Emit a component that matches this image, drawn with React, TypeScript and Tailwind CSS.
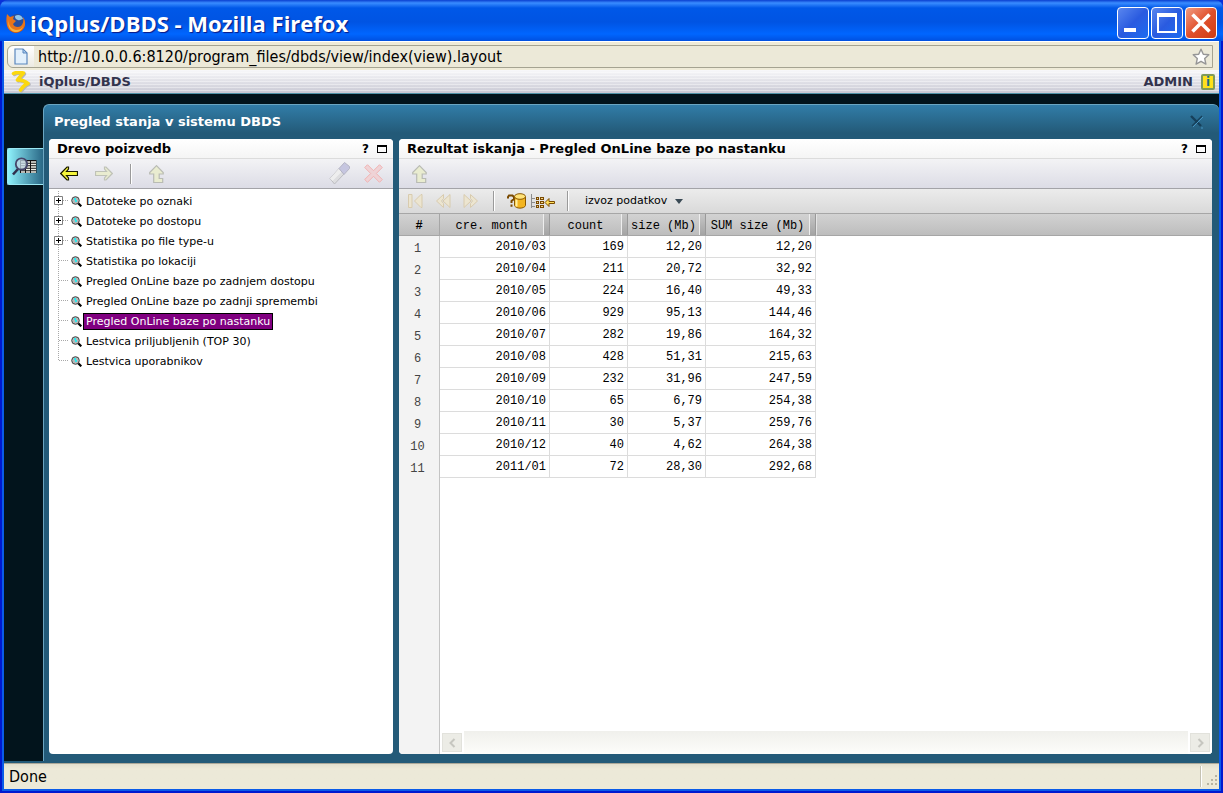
import { ReactNode } from "react";
import { clsx } from "clsx";

type TreeItem = {
    label: string;
    expandable?: boolean;
    selected?: boolean;
};

const treeItems: TreeItem[] = [
    { label: "Datoteke po oznaki", expandable: true },
    { label: "Datoteke po dostopu", expandable: true },
    { label: "Statistika po file type-u", expandable: true },
    { label: "Statistika po lokaciji" },
    { label: "Pregled OnLine baze po zadnjem dostopu" },
    { label: "Pregled OnLine baze po zadnji spremembi" },
    { label: "Pregled OnLine baze po nastanku", selected: true },
    { label: "Lestvica priljubljenih (TOP 30)" },
    { label: "Lestvica uporabnikov" },
];

const columns = ["cre. month", "count", "size (Mb)", "SUM size (Mb)"];

const rows = [
    ["2010/03", "169", "12,20", "12,20"],
    ["2010/04", "211", "20,72", "32,92"],
    ["2010/05", "224", "16,40", "49,33"],
    ["2010/06", "929", "95,13", "144,46"],
    ["2010/07", "282", "19,86", "164,32"],
    ["2010/08", "428", "51,31", "215,63"],
    ["2010/09", "232", "31,96", "247,59"],
    ["2010/10", "65", "6,79", "254,38"],
    ["2010/11", "30", "5,37", "259,76"],
    ["2010/12", "40", "4,62", "264,38"],
    ["2011/01", "72", "28,30", "292,68"],
];

function FirefoxIcon() {
    return (
        <svg width="20" height="22" viewBox="0 0 20 22" aria-hidden="true">
            <circle cx="10" cy="12" r="9" fill="#c4480c" />
            <circle cx="11" cy="9" r="7" fill="#2b4f9c" />
            <path d="M9 4c3-2 7-1 8 3-2 0-3 2-5 1s-3-1-3-4z" fill="#8fc6ee" />
            <path d="M1 2l3 3 4-1-1 3 3 2-3 3c1 3 5 4 8 2 2-2 3-5 2-9 3 4 3 10-1 13-4 4-11 3-14-2-2-4-2-9-1-14z" fill="#e8741a" />
            <path d="M3 8c-1 5 2 9 7 10 3 0 6-1 7-4-1 6-8 8-12 4-3-3-3-7-2-10z" fill="#f7b03c" />
        </svg>
    );
}

function PageIcon() {
    return (
        <svg width="14" height="17" viewBox="0 0 14 17" aria-hidden="true">
            <path d="M1 1h8l4 4v11H1z" fill="#e3f0fc" stroke="#5b87bd" strokeWidth="1.2" />
            <path d="M9 1v4h4z" fill="#a9cbee" stroke="#5b87bd" />
        </svg>
    );
}

function StarIcon() {
    return (
        <svg width="18" height="18" viewBox="0 0 18 18" aria-hidden="true">
            <path d="M9 1.2l2.3 5 5.5.6-4.1 3.7 1.2 5.6L9 13.3l-4.9 2.8 1.2-5.6L1.2 6.8l5.5-.6z" fill="#fff" stroke="#969696" strokeWidth="1.4" strokeLinejoin="round" />
        </svg>
    );
}

function LogoIcon() {
    return (
        <svg width="20" height="22" viewBox="0 0 20 22" fill="none" strokeLinecap="round" strokeLinejoin="round" aria-hidden="true">
            <path d="M3.5 3.5c4-2 7-1 10-.5-2 2-4 4-6 7 4-.5 7 1 10.500 3.500-3 1-5 3-7.500 6.500" stroke="#b4b4bc" strokeWidth="3.4" />
            <path d="M2.5 2.500c4-2 7-1 10-.5-2 2-4 4-6 7 4-.5 7 1 10.500 3.500-3 1-5 3-7.500 6.500" stroke="#fbd80f" strokeWidth="3.6" />
        </svg>
    );
}

function SideArrow({ disabled, flip }: { disabled?: boolean; flip?: boolean }) {
    return (
        <svg width="18" height="15" viewBox="0 0 18 15" className={clsx("block", flip && "-scale-x-100")} aria-hidden="true">
            <path
                d="M.7 7.5L7 1h1.5v2L6.5 5.5h11v4h-11l2 2.5v2H7z"
                fill={disabled ? "#e9ecd0" : "#f6f63c"}
                stroke={disabled ? "#bfc2b8" : "#1a1a00"}
                strokeWidth="1.2"
            />
        </svg>
    );
}

function UpArrow() {
    return (
        <svg width="15" height="18" viewBox="0 0 15 18" className="block" aria-hidden="true">
            <path d="M7.5.7L.7 7.5V9h4v8.500h9v-4h-3.500V9h4V7.500z" fill="#e9ecd0" stroke="#b9bbb4" strokeWidth="1.2" />
        </svg>
    );
}

function EraserIcon() {
    return (
        <svg width="21" height="23" viewBox="0 0 21 23" className="block" aria-hidden="true">
            <path d="M1 16.500L10 6.500l5 5.500-9.500 10z" fill="#dedee0" stroke="#bcbcc0" />
            <path d="M1 16.500L10 6.500l3 3-9.500 9.500z" fill="#eeeeee" />
            <path d="M15.500.5l5 4v2L15 12.500l-5-6z" fill="#c6c6e0" stroke="#b4b4c4" />
        </svg>
    );
}

function DeleteIcon() {
    return (
        <svg width="19" height="19" viewBox="0 0 19 19" className="block" aria-hidden="true">
            <path d="M3.5.7l6 6 6-6 2.800 2.800-6 6 6 6-2.800 2.800-6-6-6 6L.7 15.500l6-6-6-6z" fill="#efd3d6" stroke="#f0b3b3" />
        </svg>
    );
}

function PagerIcon({ kind }: { kind: "first" | "prev" | "next" }) {
    return (
        <svg width="16" height="14" viewBox="0 0 16 14" className={clsx("block", kind === "next" && "-scale-x-100")} fill="#ece5d0" stroke="#d8cbae" aria-hidden="true">
            {kind === "first" ? (
                <>
                    <path d="M1.500.5H5v13H1.500z" />
                    <path d="M15 .5v13h-1L7.500 7 14 .5z" />
                </>
            ) : (
                <>
                    <path d="M8.500.5v4L6.500 7l2 2.500v4L1.500 7z" />
                    <path d="M15 .5v13L8 7z" />
                </>
            )}
        </svg>
    );
}

function QueryDbIcon() {
    return (
        <svg width="19" height="16" viewBox="0 0 19 16" className="block" aria-hidden="true">
            <path d="M1 5.5V4l1-1.500h3.500L7 4v2L4.500 8v2M4.500 11.500v2.300" fill="none" stroke="#7a4a00" strokeWidth="2" />
            <path d="M7.500 4v8.500c1 3.500 10 3.500 11 0V4z" fill="#f3b521" stroke="#8a5800" />
            <path d="M9.500 6.500v7" stroke="#fff0a0" strokeWidth="2" />
            <ellipse cx="13" cy="3.500" rx="5.500" ry="2.800" fill="#ffe278" stroke="#8a5800" />
        </svg>
    );
}

function GroupIcon() {
    return (
        <svg width="25" height="15" viewBox="0 0 25 15" className="block" fill="none" aria-hidden="true">
            <path d="M1.500 0v14M1.500 4.500H5M1.500 8.500H5M1.500 12.500H5" stroke="#8c8c8c" />
            <path d="M6 4.500h3M10 4.500h4M6 8.500h3M10 8.500h4M6 12.500h3M10 12.500h4" stroke="#7a4a00" strokeWidth="3" />
            <path d="M7 4.500h1M11 4.500h2M7 8.500h1M11 8.500h2M7 12.500h1M11 12.500h2" stroke="#f3d38a" />
            <path d="M15 8.500l4-4v3h5.500v2H19v3z" fill="#ffdf5a" stroke="#7a4a00" />
        </svg>
    );
}

function Magnifier() {
    return (
        <svg width="11" height="11" viewBox="0 0 11 11" className="shrink-0" aria-hidden="true">
            <path d="M6.500 6.500l3.800 3.800" stroke="#000" strokeWidth="2.200" />
            <circle cx="4.500" cy="4.500" r="3.800" fill="#b4b8b8" stroke="#444" />
            <path d="M3 2h2v2h1v2H4V4H3z" fill="#2fe6ea" />
        </svg>
    );
}

function SearchTableIcon() {
    return (
        <svg width="25" height="19" viewBox="0 0 25 19" className="block" aria-hidden="true">
            <path d="M8 3h16.500v13H8z" fill="#111" />
            <path d="M9 5h15M9 7.500h15M9 10h15M9 12.500h15M9 15h15" stroke="#f2f2ea" strokeWidth="1.500" />
            <path d="M13.500 3v13M18.500 3v13" stroke="#111" />
            <path d="M6 12l-5 5.500" stroke="#2f2f4d" strokeWidth="2.600" />
            <circle cx="9.500" cy="7" r="5.700" fill="#c5dbe8" fillOpacity=".75" stroke="#45456a" strokeWidth="1.800" />
        </svg>
    );
}

function TreeLines({ expandable, last }: { expandable?: boolean; last: boolean }) {
    return (
        <svg width="22" height="20" viewBox="0 0 22 20" className="shrink-0" aria-hidden="true">
            <path d={last ? "M9.500 0v10" : "M9.500 0v20"} stroke="#a8a8a8" strokeDasharray="1 1" />
            <path d="M10 9.500h10" stroke="#a8a8a8" strokeDasharray="1 1" />
            {expandable && (
                <>
                    <path d="M5.500 5.500h8v8h-8z" fill="#fff" stroke="#808080" />
                    <path d="M7 9.500h5M9.500 7v5" stroke="#000" />
                </>
            )}
        </svg>
    );
}

function Separator() {
    return <div className="h-5 w-0.5 border-l border-[#9a9a9a] bg-white" />;
}

function IconButton({ label, disabled, children }: { label: string; disabled?: boolean; children: ReactNode }) {
    return (
        <button type="button" aria-label={label} disabled={disabled} className="block shrink-0">
            {children}
        </button>
    );
}

function Panel({ title, className, children }: { title: string; className?: string; children: ReactNode }) {
    return (
        <section className={clsx("flex min-h-0 flex-col overflow-hidden rounded bg-white", className)}>
            <header className="flex h-5 shrink-0 items-center justify-between border-b border-[#dcdcdc] bg-linear-to-b from-white to-[#f5f5f5] pr-1.5 pl-2">
                <h2 className="text-[13px] font-bold">{title}</h2>
                <div className="flex items-center gap-2">
                    <button type="button" className="text-[12px] leading-4 font-bold">?</button>
                    <button type="button" aria-label="Maximize panel" className="h-2 w-2.5 border border-t-2 border-black" />
                </div>
            </header>
            {children}
        </section>
    );
}

function TitleBar() {
    return (
        <div className="flex h-[41px] shrink-0 items-center justify-between rounded-t-lg bg-[linear-gradient(to_bottom,#0a3fd0,#3a8cff_3px,#0058e8_8px,#0054e3_22px,#0066ff_34px,#0050e0)] px-1.5">
            <div className="flex items-center gap-1 pt-1">
                <FirefoxIcon />
                <h1 className="font-['Open_Sans',sans-serif] text-[22px] leading-8 font-bold text-white [text-shadow:1px_1px_1px_#0a1883]">
                    iQplus/DBDS - Mozilla Firefox
                </h1>
            </div>
            <div className="flex gap-0.5 pt-1">
                <button type="button" aria-label="Minimize" className="flex size-8 items-end rounded border border-white bg-linear-to-br from-[#5a86ee] via-[#2a5be0] to-[#1a6cf0] pb-1.5 pl-1.5">
                    <span className="h-1 w-3 bg-white" />
                </button>
                <button type="button" aria-label="Maximize" className="flex size-8 items-center justify-center rounded border border-white bg-linear-to-br from-[#5a86ee] via-[#2a5be0] to-[#1a6cf0]">
                    <span className="size-5 border-2 border-t-4 border-white" />
                </button>
                <button type="button" aria-label="Close" className="flex size-8 items-center justify-center rounded border border-white bg-linear-to-br from-[#f09a80] via-[#e0502c] to-[#d03c10]">
                    <svg width="20" height="20" viewBox="0 0 20 20" aria-hidden="true">
                        <path d="M1.500 1.500l17 17M18.500 1.500l-17 17" stroke="#fff" strokeWidth="3.600" />
                    </svg>
                </button>
            </div>
        </div>
    );
}

function AddressBar() {
    return (
        <div className="h-[29px] shrink-0 border-t border-white bg-[#efebd8] py-[3px] pr-1.5 pl-[3px]">
            <div className="flex h-[23px] items-center rounded-l-md border border-[#a5a391] bg-[#ece9d8]">
                <div className="flex h-full w-[26px] items-center justify-center rounded-l-md bg-linear-to-b from-white to-[#eceae2]">
                    <PageIcon />
                </div>
                <input
                    type="text"
                    aria-label="Address"
                    defaultValue="http://10.0.0.6:8120/program_files/dbds/view/index(view).layout"
                    className="min-w-0 flex-1 bg-transparent pl-1 font-['DejaVu_Sans_Condensed','DejaVu_Sans',sans-serif] text-[16px] leading-5 outline-none"
                />
                <button type="button" aria-label="Bookmark" className="pr-0.5">
                    <StarIcon />
                </button>
            </div>
        </div>
    );
}

function AppHeader() {
    return (
        <div className="flex h-6 shrink-0 items-center justify-between border-b border-[#4f93a8] bg-[repeating-linear-gradient(to_bottom,transparent_0_2px,#ffffff66_2px_3px),linear-gradient(to_bottom,#f8f8fa,#c9c9d4)] pr-1 pl-[7px]">
            <div className="flex items-center gap-2">
                <LogoIcon />
                <span className="text-[13px] font-bold text-[#33334d]">iQplus/DBDS</span>
            </div>
            <div className="flex items-center gap-2">
                <span className="text-[13px] font-bold text-[#33334d]">ADMIN</span>
                <button type="button" className="h-4 w-3.5 rounded-xs border-2 border-[#7f9a5a] bg-[#ffe11a] text-[12px] leading-3 font-bold text-[#1d6f86]">i</button>
            </div>
        </div>
    );
}

function TreePanel() {
    return (
        <Panel title="Drevo poizvedb" className="w-[344px] shrink-0">
            <div className="flex h-[30px] shrink-0 items-center justify-between border-b border-[#a3a3a8] bg-linear-to-b from-[#f3f3f5] to-[#dcdce6] pr-2.5 pl-[11px]">
                <div className="flex items-center gap-[17px]">
                    <IconButton label="Nazaj"><SideArrow /></IconButton>
                    <IconButton label="Naprej" disabled><SideArrow disabled flip /></IconButton>
                    <Separator />
                    <IconButton label="Gor" disabled><UpArrow /></IconButton>
                </div>
                <div className="flex items-center gap-3.5">
                    <IconButton label="Uredi" disabled><EraserIcon /></IconButton>
                    <IconButton label="Izbrisi" disabled><DeleteIcon /></IconButton>
                </div>
            </div>
            <ul className="overflow-auto pt-0.5 text-[11px]">
                {treeItems.map((item, index) => (
                    <li key={item.label} className="flex h-5 items-center">
                        <TreeLines expandable={item.expandable} last={index === treeItems.length - 1} />
                        <Magnifier />
                        <a
                            href="#"
                            className={clsx(
                                "ml-px border px-0.5 leading-[15px] whitespace-nowrap",
                                item.selected ? "border-black bg-[#800080] text-white" : "border-transparent"
                            )}
                        >
                            {item.label}
                        </a>
                    </li>
                ))}
            </ul>
        </Panel>
    );
}

function ResultTable() {
    return (
        <table className="w-full table-fixed border-separate border-spacing-0 font-['Liberation_Mono',monospace] text-[12px] leading-4">
            <colgroup>
                <col className="w-[41px]" />
                <col className="w-[110px]" />
                <col className="w-[78px]" />
                <col className="w-[78px]" />
                <col className="w-[110px]" />
                <col />
            </colgroup>
            <thead>
                <tr className="bg-linear-to-b from-[#d2d2d2] to-[#bcbcbc]">
                    <th className="h-[22px] border-r border-b border-[#a6a6a6] p-0 pt-0.5 font-bold">#</th>
                    {columns.map((column) => (
                        <th key={column} className="border-b border-[#a6a6a6] p-0 font-normal">
                            <div className="flex h-[21px] items-center">
                                <span className="flex-1 pt-0.5 text-center whitespace-nowrap">{column}</span>
                                <span className="h-full w-[7px] border-r border-l border-r-[#999] border-l-[#eee] bg-linear-to-b from-[#c6c6c6] to-[#a4a4a4]" />
                            </div>
                        </th>
                    ))}
                    <th className="border-b border-l border-b-[#a6a6a6] border-l-[#e4e4e4] p-0" />
                </tr>
            </thead>
            <tbody>
                {rows.map((row, index) => (
                    <tr key={row[0]}>
                        <td className="h-[22px] p-0 pt-1 pr-1 text-center text-[#444]">{index + 1}</td>
                        {row.map((value, i) => (
                            <td key={i} className="border-r border-b border-[#dcdcdc] p-0 pr-[3px] text-right">{value}</td>
                        ))}
                        <td />
                    </tr>
                ))}
            </tbody>
        </table>
    );
}

function ScrollButton({ label, flip }: { label: string; flip?: boolean }) {
    return (
        <button type="button" aria-label={label} className="flex w-6 items-center justify-center border-2 border-white bg-[#ecece6] shadow-[inset_0_0_0_1px_#e2e2dc]">
            <svg width="7" height="10" viewBox="0 0 7 10" className={clsx(flip && "-scale-x-100")} aria-hidden="true">
                <path d="M5.500 1l-4 4 4 4" fill="none" stroke="#c6c6c0" strokeWidth="2" />
            </svg>
        </button>
    );
}

function ResultPanel() {
    return (
        <Panel title="Rezultat iskanja - Pregled OnLine baze po nastanku" className="min-w-0 flex-1">
            <div className="flex h-[30px] shrink-0 items-center border-b border-[#a3a3a8] bg-linear-to-b from-[#f3f3f5] to-[#dcdce6] pl-[13px]">
                <IconButton label="Gor" disabled><UpArrow /></IconButton>
            </div>
            <div className="flex h-[25px] shrink-0 items-center border-b border-[#a6a6a6] bg-linear-to-b from-[#ececec] to-[#d9d9d9] pl-2">
                <div className="flex gap-3">
                    <IconButton label="Prva stran" disabled><PagerIcon kind="first" /></IconButton>
                    <IconButton label="Prejsnja stran" disabled><PagerIcon kind="prev" /></IconButton>
                    <IconButton label="Naslednja stran" disabled><PagerIcon kind="next" /></IconButton>
                </div>
                <div className="flex items-center gap-3 pl-3.5">
                    <Separator />
                    <div className="flex items-center gap-1">
                        <IconButton label="Poizvedba"><QueryDbIcon /></IconButton>
                        <IconButton label="Grupiranje"><GroupIcon /></IconButton>
                    </div>
                    <Separator />
                </div>
                <button type="button" aria-haspopup="menu" className="flex items-center gap-2 pl-4 text-[11px]">
                    izvoz podatkov
                    <svg width="8" height="5" viewBox="0 0 8 5" aria-hidden="true">
                        <path d="M0 0h8L4 5z" fill="#3a4a55" />
                    </svg>
                </button>
            </div>
            <div className="flex min-h-0 flex-1 flex-col bg-[linear-gradient(to_right,#f3f3f3_40px,#c4c4c4_40px,#c4c4c4_41px,#ffffff_41px)]">
                <div className="min-h-0 flex-1 overflow-auto">
                    <ResultTable />
                </div>
                <div className="ml-[41px] flex h-[23px] shrink-0 justify-between bg-linear-to-b from-[#f0f0ec] to-[#fdfdfa]">
                    <ScrollButton label="Levo" />
                    <ScrollButton label="Desno" flip />
                </div>
            </div>
        </Panel>
    );
}

export default function App() {
    return (
        <div className="flex h-screen flex-col bg-[#0831d9] font-['DejaVu_Sans',sans-serif] text-black">
            <TitleBar />
            <div className="flex min-h-0 flex-1 flex-col border-x-2 border-b-2 border-[#0019cf]">
                <div className="flex min-h-0 flex-1 flex-col border-x-2 border-b-2 border-[#0a5be8]">
                    <AddressBar />
                    <AppHeader />
                    <main className="flex min-h-0 flex-1 border-b-2 border-[#235a78] bg-[#02141c] pt-2.5">
                        <nav className="w-[39px] shrink-0 pt-11 pl-[3px]">
                            <button type="button" aria-label="Pregled" className="flex h-[37px] w-full items-center rounded-l-xs border-y border-l border-[#9be8f4] bg-linear-to-r from-[#8ff2fc] to-[#2a6886] pl-1">
                                <SearchTableIcon />
                            </button>
                        </nav>
                        <div className="flex min-w-0 flex-1 flex-col rounded-t-md border-t border-l border-[#6ba6c2] bg-[#235a78] bg-[linear-gradient(to_bottom,#317da8,#235a78_28px)] pr-[7px] pb-[7px] pl-[5px]">
                            <div className="flex h-[34px] shrink-0 items-center justify-between pr-2 pl-[5px]">
                                <h2 className="text-[13px] font-bold text-white">Pregled stanja v sistemu DBDS</h2>
                                <button type="button" aria-label="Zapri">
                                    <svg width="14" height="14" viewBox="0 0 14 14" aria-hidden="true">
                                        <path d="M1 1l10 10" stroke="#17405a" strokeWidth="2.4" />
                                        <path d="M12 1L2 11" stroke="#17405a" strokeWidth="1.2" />
                                        <path d="M13 2L3 12M11 13h2" stroke="#4794c0" />
                                    </svg>
                                </button>
                            </div>
                            <div className="flex min-h-0 flex-1 gap-1.5">
                                <TreePanel />
                                <ResultPanel />
                            </div>
                        </div>
                    </main>
                    <footer className="flex h-[26px] shrink-0 items-center justify-between border-t border-[#aca899] bg-linear-to-b from-[#e2dfce] to-[#ece9d8] to-20% pl-[5px]">
                        <span className="font-['DejaVu_Sans_Condensed','DejaVu_Sans',sans-serif] text-[16px] leading-5">Done</span>
                        <div className="flex h-full items-end gap-1 py-0.5">
                            <div className="h-full w-0.5 border-l border-[#c5c2b2] bg-white" />
                            <svg width="13" height="13" viewBox="0 0 13 13" fill="#b8b4a2" aria-hidden="true">
                                <path d="M9 1h2v2H9zM5 5h2v2H5zM9 5h2v2H9zM1 9h2v2H1zM5 9h2v2H5zM9 9h2v2H9z" />
                            </svg>
                        </div>
                    </footer>
                </div>
            </div>
        </div>
    );
}
